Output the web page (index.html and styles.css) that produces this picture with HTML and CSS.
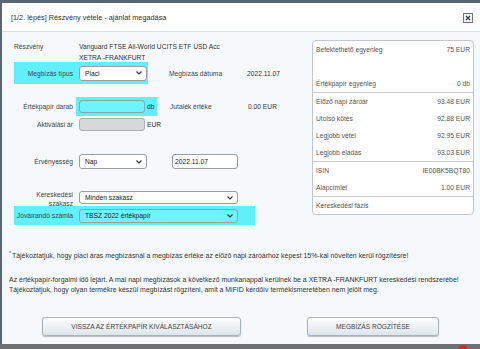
FILE: index.html
```html
<!DOCTYPE html>
<html lang="hu">
<head>
    <meta charset="UTF-8">
    <meta name="viewport" content="width=device-width, initial-scale=1.0">
    <title>Részvény vétele</title>
    <link rel="stylesheet" href="styles.css">
</head>
<body>
    <div class="screen">
        <div class="dialog">
            <div class="dialog-header">
                <span class="dialog-title">[1/2. lépés] Részvény vétele - ajánlat megadása</span>
                <button class="close-btn" title="Bezárás">
                    <svg width="10" height="10" viewBox="0 0 10 10">
                        <rect x="0.5" y="0.5" width="9" height="9" fill="#eef0f2" stroke="#6f7479"/>
                        <path d="M3 3 L7 7 M7 3 L3 7" stroke="#3b3f44" stroke-width="1.2"/>
                    </svg>
                </button>
            </div>

            <div class="dialog-body">
                <div class="order-main">
                    <div class="order-form">
                        <div class="row row-stock">
                            <span class="label label-left">Részvény</span>
                            <div class="stock-name">Vanguard FTSE All-World UCITS ETF USD Acc<br>XETRA -FRANKFURT</div>
                        </div>

                        <div class="row row-type">
                            <div class="hl hl-type">
                                <span class="label">Megbízás típus</span>
                                <div class="select sel-short">
                                    <span>Piaci</span>
                                    <svg class="chev" width="6" height="4" viewBox="0 0 6 4"><path d="M0.5 0.5 L3 3 L5.5 0.5" fill="none" stroke="#333" stroke-width="1.1"/></svg>
                                </div>
                            </div>
                            <span class="label-side">Megbízás dátuma</span>
                            <span class="value-side">2022.11.07</span>
                        </div>

                        <div class="row row-amount">
                            <span class="label label-tight">Értékpapír darab</span>
                            <div class="hl hl-amount">
                                <div class="input input-active"></div>
                                <span class="unit">db</span>
                            </div>
                            <span class="label-side side-amount">Jutalék értéke</span>
                            <span class="value-side">0.00 EUR</span>
                        </div>

                        <div class="row row-limit">
                            <span class="label">Aktiválási ár</span>
                            <div class="input input-disabled"></div>
                            <span class="unit">EUR</span>
                        </div>

                        <div class="row row-valid">
                            <span class="label">Érvényesség</span>
                            <div class="select sel-short">
                                <span>Nap</span>
                                <svg class="chev" width="6" height="4" viewBox="0 0 6 4"><path d="M0.5 0.5 L3 3 L5.5 0.5" fill="none" stroke="#333" stroke-width="1.1"/></svg>
                            </div>
                            <div class="input input-date">2022.11.07</div>
                        </div>

                        <div class="row row-session">
                            <span class="label label-wrap">Kereskedési<br>szakasz</span>
                            <div class="select sel-long">
                                <span>Minden szakasz</span>
                                <svg class="chev" width="6" height="4" viewBox="0 0 6 4"><path d="M0.5 0.5 L3 3 L5.5 0.5" fill="none" stroke="#333" stroke-width="1.1"/></svg>
                            </div>
                        </div>

                        <div class="row row-account">
                            <div class="hl hl-account">
                                <span class="label">Jóváírandó számla</span>
                                <div class="select sel-long sel-active">
                                    <span>TBSZ 2022 értékpapír</span>
                                    <svg class="chev" width="6" height="4" viewBox="0 0 6 4"><path d="M0.5 0.5 L3 3 L5.5 0.5" fill="none" stroke="#333" stroke-width="1.1"/></svg>
                                </div>
                            </div>
                        </div>
                    </div>

                    <div class="info-panel">
                        <div class="info-group">
                            <div class="info-row"><span>Befektethető egyenleg</span><span>75 EUR</span></div>
                            <div class="info-row"></div>
                            <div class="info-row"><span>Értékpapír egyenleg</span><span>0 db</span></div>
                        </div>
                        <div class="info-group">
                            <div class="info-row"><span>Előző napi záróár</span><span>93.48 EUR</span></div>
                            <div class="info-row"><span>Utolsó kötés</span><span>92.88 EUR</span></div>
                            <div class="info-row"><span>Legjobb vétel</span><span>92.95 EUR</span></div>
                            <div class="info-row"><span>Legjobb eladás</span><span>93.03 EUR</span></div>
                        </div>
                        <div class="info-group">
                            <div class="info-row"><span>ISIN</span><span>IE00BK5BQT80</span></div>
                            <div class="info-row"><span>Alapcímlet</span><span>1.00 EUR</span></div>
                        </div>
                        <div class="info-group">
                            <div class="info-row"><span>Kereskedési fázis</span><span></span></div>
                        </div>
                    </div>
                </div>

                <div class="notes">
                    <p class="note-first"><sup>*</sup>Tájékoztatjuk, hogy piaci áras megbízásnál a megbízás értéke az előző napi záróárhoz képest 15%-kal növelten kerül rögzítésre!</p>
                    <p class="note-second">Az értékpapír-forgalmi idő lejárt. A mai napi megbízások a következő munkanappal kerülnek be a XETRA -FRANKFURT kereskedési rendszerébe!<br>Tájékoztatjuk, hogy olyan termékre készül megbízást rögzíteni, amit a MiFID kérdőív termékismeretében nem jelölt meg.</p>
                </div>

                <div class="actions">
                    <button class="btn btn-back">VISSZA AZ ÉRTÉKPAPÍR KIVÁLASZTÁSÁHOZ</button>
                    <button class="btn btn-save">MEGBÍZÁS RÖGZÍTÉSE</button>
                </div>
            </div>
        </div>
        <div class="taskbar">
            <span class="tray-dot"></span>
        </div>
    </div>
</body>
</html>
```

FILE: styles.css
```css
body {
    margin: 0;
    font-family: "Liberation Sans", Arial, sans-serif;
    font-size: 6.7px;
    color: #3a3a3a;
    background-color: #5c6670;
}
.screen {
    width: 480px;
    height: 349px;
    overflow: hidden;
    padding-top: 3px;
    box-sizing: border-box;
    background-color: #5c6670;
}
.dialog {
    margin-left: 2px;
    height: 341px;
    background-color: #f6f9fc;
    display: flex;
    flex-direction: column;
}
.dialog-header {
    height: 28px;
    flex-shrink: 0;
    background-color: #fff;
    border-bottom: 1px solid #d9dfe4;
    display: flex;
    align-items: center;
    justify-content: space-between;
    padding: 0 7px 0 9px;
}
.dialog-title {
    font-size: 7.3px;
    color: #333;
}
.close-btn {
    border: none;
    background: none;
    padding: 0;
    width: 10px;
    height: 10px;
    display: flex;
    margin-top: 1px;
}
.dialog-body {
    flex: 1;
    display: flex;
    flex-direction: column;
}
.order-main {
    display: flex;
    justify-content: space-between;
    padding: 9px 6px 0 12px;
}
.order-form {
    display: flex;
    flex-direction: column;
}
.row {
    display: flex;
    align-items: center;
}
.label {
    width: 59px;
    margin-right: 6px;
    text-align: right;
    color: #444;
    flex-shrink: 0;
}
.label-left {
    text-align: left;
    line-height: 11px;
}
.label-tight {
    margin-right: 3px;
}
.label-wrap {
    line-height: 9px;
}
.hl {
    display: flex;
    align-items: center;
    background-color: #62eefa;
    box-sizing: border-box;
}
.stock-name {
    line-height: 11px;
    color: #333;
}
.row-stock {
    height: 21px;
    align-items: flex-start;
}
.row-type {
    height: 22px;
}
.hl-type {
    width: 134px;
    height: 22px;
}
.label-side {
    margin-left: 21px;
    width: 78px;
    color: #444;
}
.side-amount {
    margin-left: 13px;
}
.value-side {
    color: #333;
}
.select {
    height: 15px;
    box-sizing: border-box;
    border: 1px solid #9a9ea3;
    border-radius: 3px;
    background-color: #fff;
    display: flex;
    align-items: center;
    justify-content: space-between;
    padding: 0 4px 0 5px;
    color: #222;
}
.sel-short {
    width: 68px;
}
.sel-long {
    width: 159px;
}
.sel-active {
    background-color: #6ef3fd;
    height: 14px;
}
.chev {
    display: block;
}
.input {
    height: 13px;
    box-sizing: border-box;
    border: 1px solid #9a9ea3;
    border-radius: 3px;
    background-color: #fff;
    width: 66px;
}
.input-active {
    background-color: #6ff4fd;
    border-color: #7fa9b5;
}
.input-disabled {
    background-color: #d7d8d9;
    border-color: #aab0b5;
}
.input-date {
    height: 15px;
    margin-left: 25px;
    padding-left: 2px;
    display: flex;
    align-items: center;
    color: #222;
}
.unit {
    margin-left: 2px;
    color: #333;
}
.row-amount {
    margin-top: 13px;
    height: 19px;
}
.hl-amount {
    width: 81px;
    height: 19px;
    padding-left: 3px;
}
.row-limit {
    margin-top: 1px;
    height: 15px;
}
.row-valid {
    margin-top: 21px;
    height: 17px;
}
.row-session {
    margin-top: 20px;
    height: 16px;
    align-items: flex-start;
}
.row-session .select {
    height: 13px;
    margin-top: 1px;
}
.row-account {
    height: 19px;
}
.hl-account {
    width: 241px;
    height: 19px;
}
.info-panel {
    width: 160px;
    margin-top: -1px;
    align-self: flex-start;
    background-color: #fff;
    border: 1px solid #c4c7ca;
    border-radius: 4px;
    color: #555;
}
.info-group + .info-group {
    border-top: 1px solid #c9cccf;
}
.info-row {
    height: 17px;
    display: flex;
    align-items: center;
    justify-content: space-between;
    padding: 0 3px;
}
.notes {
    padding: 0 7px;
    margin-top: 23px;
    color: #333;
    font-size: 6.95px;
}
.notes p {
    margin: 0;
    line-height: 10px;
}
.notes sup {
    font-size: 5px;
    vertical-align: 3px;
    margin-right: 1px;
}
.note-second {
    margin-top: 14px !important;
}
.actions {
    display: flex;
    gap: 66px;
    padding-left: 40px;
    margin-top: 22px;
}
.btn {
    height: 19px;
    font-family: "Liberation Sans", Arial, sans-serif;
    font-size: 6.6px;
    color: #444;
    background: linear-gradient(#fdfeff, #dce5ed);
    border: 1px solid #a8b2bb;
    border-radius: 3px;
    box-shadow: 0 1px 1px rgba(0, 0, 0, 0.25);
    padding: 0;
}
.btn-back {
    width: 199px;
}
.btn-save {
    width: 132px;
}
.taskbar {
    height: 5px;
    background-color: #6e7072;
    display: flex;
    align-items: flex-start;
    padding-left: 458px;
    overflow: hidden;
}
.tray-dot {
    width: 10px;
    height: 10px;
    border-radius: 50%;
    background-color: #d42a2a;
    margin-top: 1px;
    flex-shrink: 0;
}
```
